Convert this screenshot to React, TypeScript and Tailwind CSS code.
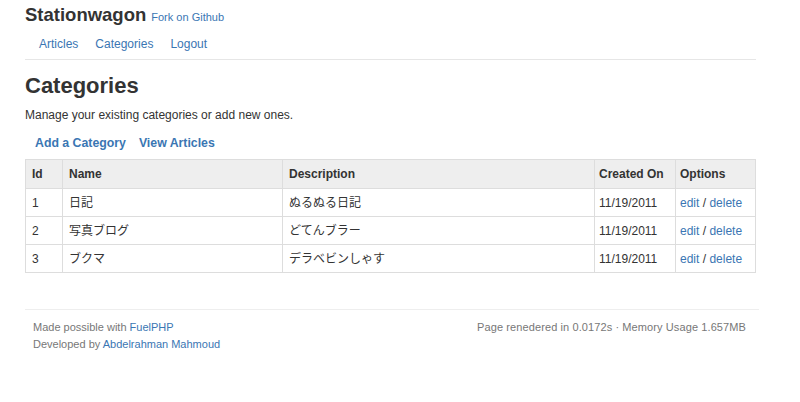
import React from "react";

const rows = [
    { id: 1, name: "日記", description: "ぬるぬる日記", created: "11/19/2011" },
    { id: 2, name: "写真ブログ", description: "どてんブラー", created: "11/19/2011" },
    { id: 3, name: "ブクマ", description: "デラベビンしゃす", created: "11/19/2011" },
];

const font = { fontFamily: '"Liberation Sans", Arial, "Noto Sans CJK JP", sans-serif' };

function App() {
    return (
        <div className="min-h-[402px] bg-white text-[#333] text-[12px]" style={font}>
            <div className="ml-[25px] w-[731px]">
                <header className="pt-[1px]">
                    <div className="flex items-baseline gap-[5px] h-[28px]">
                        <span className="text-[18.5px] font-bold text-[#333]">Stationwagon</span>
                        <a className="text-[11px] text-[#3a76b3]">Fork on Github</a>
                    </div>
                    <nav className="flex gap-[17px] pl-[14px] h-[30px] items-center text-[12px] text-[#3a76b3]">
                        <a>Articles</a>
                        <a>Categories</a>
                        <a>Logout</a>
                    </nav>
                    <div className="border-t border-[#e6e6e6]" />
                </header>

                <main>
                    <h1 className="text-[22px] font-bold leading-[26px] mt-[13px] text-[#333]">Categories</h1>
                    <p className="mt-[9px] leading-[14px]">Manage your existing categories or add new ones.</p>
                    <div className="flex gap-[13px] pl-[10px] mt-[13px] text-[12.3px] font-bold text-[#3a76b3] leading-[16px]">
                        <a>Add a Category</a>
                        <a>View Articles</a>
                    </div>

                    <table className="mt-[8px] w-full border-collapse border border-[#ddd] text-left">
                        <thead>
                            <tr className="bg-[#eeeeee] h-[29px]">
                                <th className="border border-[#ddd] px-[6px] w-[37px] font-bold">Id</th>
                                <th className="border border-[#ddd] px-[6px] w-[220px] font-bold">Name</th>
                                <th className="border border-[#ddd] px-[6px] w-[312px] font-bold">Description</th>
                                <th className="border border-[#ddd] px-[4px] w-[81px] font-bold">Created On</th>
                                <th className="border border-[#ddd] px-[4px] font-bold">Options</th>
                            </tr>
                        </thead>
                        <tbody>
                            {rows.map((row) => (
                                <tr key={row.id} className="h-[28px]">
                                    <td className="border border-[#ddd] px-[6px]">{row.id}</td>
                                    <td className="border border-[#ddd] px-[6px]">{row.name}</td>
                                    <td className="border border-[#ddd] px-[6px]">{row.description}</td>
                                    <td className="border border-[#ddd] px-[4px]">{row.created}</td>
                                    <td className="border border-[#ddd] px-[4px] text-[#3a76b3]">
                                        <a>edit</a> <span className="text-[#333]">/</span> <a>delete</a>
                                    </td>
                                </tr>
                            ))}
                        </tbody>
                    </table>
                </main>

                <footer className="mt-[36px] border-t border-[#eee] pt-[9px] flex justify-between text-[11px] text-[#777] leading-[17px] w-[734px]">
                    <div className="pl-[8px]">
                        <div>
                            Made possible with <a className="text-[#3a76b3]">FuelPHP</a>
                        </div>
                        <div>
                            Developed by <a className="text-[#3a76b3]">Abdelrahman Mahmoud</a>
                        </div>
                    </div>
                    <div className="pr-[13px] tracking-[0.1px]">Page renedered in 0.0172s · Memory Usage 1.657MB</div>
                </footer>
            </div>
        </div>
    );
}

export default App;
